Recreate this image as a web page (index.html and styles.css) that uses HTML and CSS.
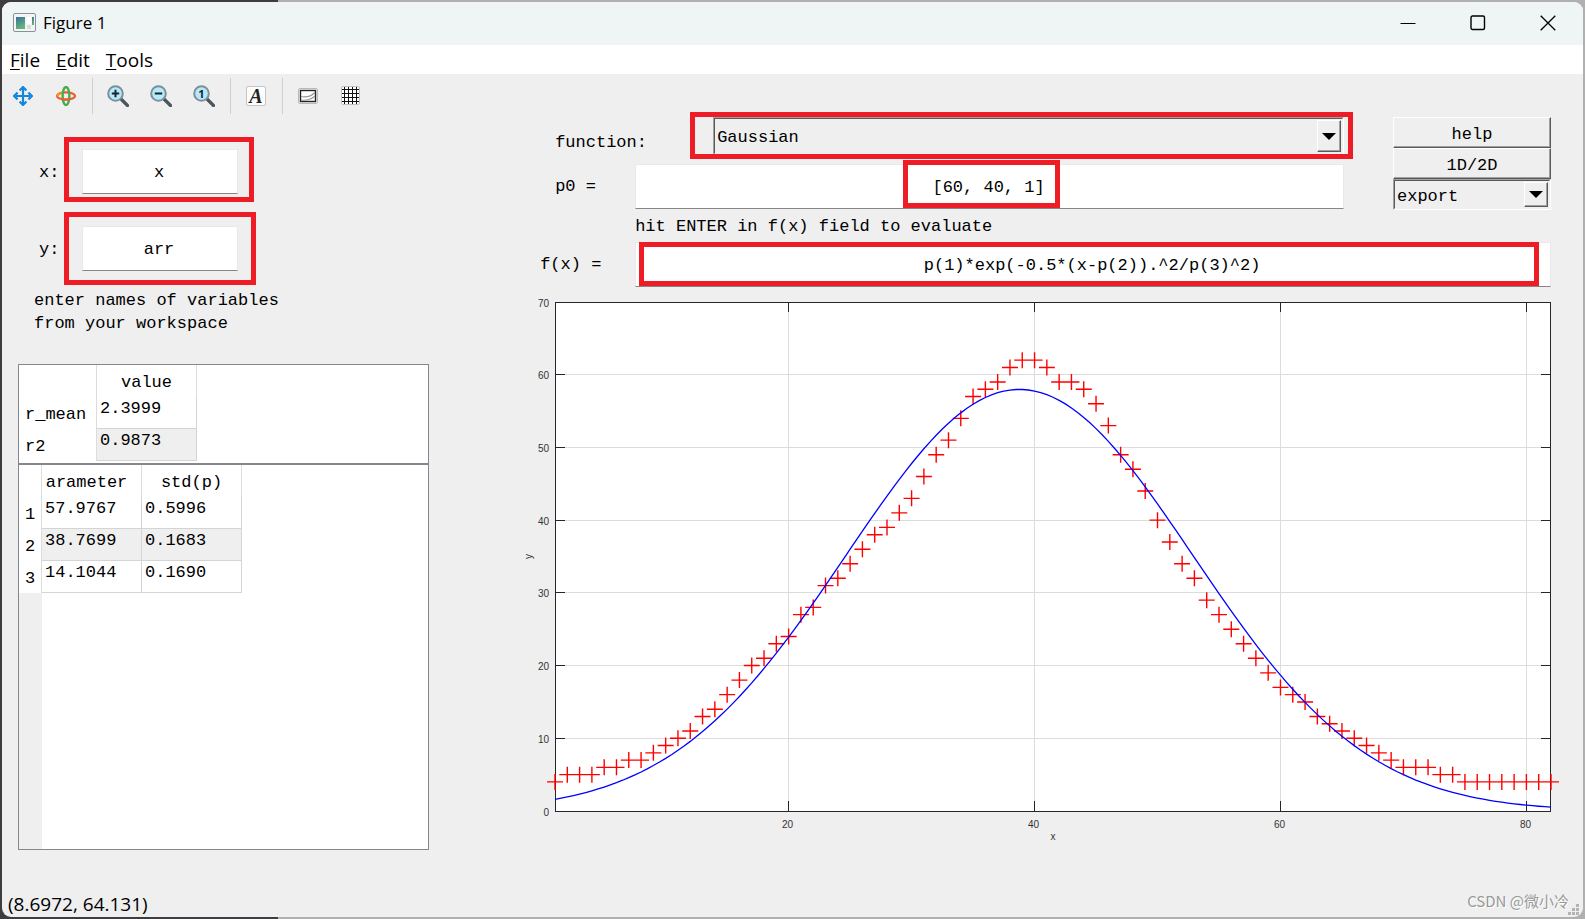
FILE: index.html
```html
<!DOCTYPE html>
<html lang="en">
<head>
<meta charset="utf-8">
<meta name="viewport" content="width=device-width, initial-scale=1">
<title>Figure 1</title>
<link rel="stylesheet" href="styles.css">
</head>
<body>
<div class="window">
  <header class="titlebar">
    <svg class="app-icon" width="24" height="20" viewBox="0 0 24 20" aria-hidden="true">
      <defs><linearGradient id="pic" x1="0" y1="0" x2="0.4" y2="1"><stop offset="0" stop-color="#3b6fa0"/><stop offset="1" stop-color="#5fb878"/></linearGradient></defs>
      <rect x="0.5" y="0.5" width="22" height="18" rx="1.5" fill="#f4f4f4" stroke="#8c9196"/>
      <rect x="3" y="4" width="9" height="12" fill="url(#pic)"/>
      <rect x="14" y="4" width="4" height="7" fill="#fff"/><rect x="14" y="12" width="4" height="4" fill="#ddd"/>
      <rect x="19" y="4" width="2" height="8" fill="url(#pic)"/>
    </svg>
    <h1 class="title">Figure 1</h1>
    <div class="window-buttons">
      <button class="window-button" aria-label="Minimize"><svg width="16" height="16" viewBox="0 0 16 16"><path d="M0.5 8.5h15" stroke="#000" fill="none"/></svg></button>
      <button class="window-button" aria-label="Maximize"><svg width="16" height="16" viewBox="0 0 16 16"><rect x="1" y="1" width="13.5" height="13.5" rx="1.5" stroke="#000" stroke-width="1.4" fill="none"/></svg></button>
      <button class="window-button" aria-label="Close"><svg width="16" height="16" viewBox="0 0 16 16"><path d="M0.7 0.7l14.6 14.6M15.3 0.7L0.7 15.3" stroke="#000" stroke-width="1.3" fill="none"/></svg></button>
    </div>
  </header>

  <nav class="menubar">
    <button class="menu"><u>F</u>ile</button>
    <button class="menu"><u>E</u>dit</button>
    <button class="menu"><u>T</u>ools</button>
  </nav>

  <div class="toolbar">
    <button class="tool" aria-label="Pan">
      <svg width="20" height="20" viewBox="0 0 20 20"><path d="M10 3v14M3 10h14" stroke="#1486dc" stroke-width="2.2"/><path d="M6.6 4.6L10 1l3.4 3.6M6.6 15.4L10 19l3.4-3.6M4.6 6.6L1 10l3.6 3.4M15.4 6.6L19 10l-3.6 3.4" fill="none" stroke="#1486dc" stroke-width="2.2" stroke-linejoin="round"/></svg>
    </button>
    <button class="tool" aria-label="Rotate">
      <svg width="20" height="20" viewBox="0 0 20 20"><ellipse cx="10" cy="10" rx="9" ry="3.6" fill="none" stroke="#f4582e" stroke-width="2.2"/><path d="M1.2 10.5C1.5 7.500 5 6.500 8 6.400" fill="none" stroke="#ff8a1c" stroke-width="2.2"/><ellipse cx="10" cy="10" rx="3.4" ry="9" fill="none" stroke="#45ac4b" stroke-width="2.4"/><path d="M6 13.2q4 0.8 8 0" fill="none" stroke="#f4582e" stroke-width="2"/></svg>
    </button>
    <span class="separator"></span>
    <button class="tool" aria-label="Zoom in">
      <svg width="22" height="22" viewBox="0 0 22 22"><path d="M14 14l6.500 6.500" stroke="#4b555c" stroke-width="3.2" stroke-linecap="round"/><circle cx="8.500" cy="8.500" r="7.300" fill="#b5e9fb" stroke="#7d8f99" stroke-width="2"/><path d="M4.800 8.500h7.400M8.500 4.800v7.400" stroke="#17252e" stroke-width="2"/></svg>
    </button>
    <button class="tool" aria-label="Zoom out">
      <svg width="22" height="22" viewBox="0 0 22 22"><path d="M14 14l6.500 6.500" stroke="#4b555c" stroke-width="3.2" stroke-linecap="round"/><circle cx="8.500" cy="8.500" r="7.300" fill="#b5e9fb" stroke="#7d8f99" stroke-width="2"/><path d="M4.800 8.500h7.400" stroke="#17252e" stroke-width="2"/></svg>
    </button>
    <button class="tool" aria-label="Original size">
      <svg width="22" height="22" viewBox="0 0 22 22"><path d="M14 14l6.500 6.500" stroke="#4b555c" stroke-width="3.2" stroke-linecap="round"/><circle cx="8.500" cy="8.500" r="7.300" fill="#b5e9fb" stroke="#7d8f99" stroke-width="2"/><text class="lens-digit" x="8.500" y="12.500" text-anchor="middle">1</text></svg>
    </button>
    <span class="separator"></span>
    <button class="tool" aria-label="Insert text">
      <svg width="20" height="20" viewBox="0 0 20 20"><rect x="0.500" y="0.500" width="19" height="19" rx="1.500" fill="#fdfdfd" stroke="#c4c4c4"/><text class="text-glyph" x="10" y="17" text-anchor="middle">A</text></svg>
    </button>
    <span class="separator"></span>
    <button class="tool" aria-label="Axes">
      <svg width="20" height="16" viewBox="0 0 20 16"><rect x="0.500" y="0.500" width="19" height="15" rx="1.500" fill="#f4f4f4" stroke="#b9b9b9"/><rect x="2.500" y="2.500" width="15" height="11" fill="#fff" stroke="#222" stroke-width="1.4"/><path d="M3 8.500c5 1 10 0 14-4M3 12c5 1 11-1 14-4" fill="none" stroke="#999" stroke-width="1.2"/></svg>
    </button>
    <button class="tool" aria-label="Grid">
      <svg width="20" height="20" viewBox="0 0 20 20"><rect x="0.500" y="0.500" width="18" height="18" rx="1.500" fill="#fdfdfd" stroke="#c0c0c0"/><path d="M3.500 1v17M7.500 1v17M11.500 1v17M15.500 1v17M1 3.500h17M1 7.500h17M1 11.500h17M1 15.500h17" stroke="#111" fill="none"/></svg>
    </button>
  </div>

  <main class="figure">
    <section class="data-panel">
      <div class="variables">
        <label for="var-x">x:</label>
        <div class="field"><input id="var-x" class="edit" value="x"><span class="mark mark-x"></span></div>
        <label for="var-y">y:</label>
        <div class="field"><input id="var-y" class="edit" value="arr"><span class="mark mark-y"></span></div>
      </div>
      <p class="note">enter names of variables<br>from your workspace</p>
      <div class="sheet">
        <table class="grid">
          <thead><tr><td class="corner-wide"></td><th scope="col">value</th></tr></thead>
          <tbody>
            <tr><th scope="row">r_mean</th><td>2.3999</td></tr>
            <tr><th scope="row">r2</th><td>0.9873</td></tr>
          </tbody>
        </table>
      </div>
      <div class="sheet sheet-fill">
        <table class="grid">
          <thead><tr><td class="corner-narrow"></td><th scope="col" class="clipped">arameter</th><th scope="col">std(p)</th></tr></thead>
          <tbody>
            <tr><th scope="row">1</th><td>57.9767</td><td>0.5996</td></tr>
            <tr><th scope="row">2</th><td>38.7699</td><td>0.1683</td></tr>
            <tr><th scope="row">3</th><td>14.1044</td><td>0.1690</td></tr>
          </tbody>
        </table>
        <div class="gutter"></div>
      </div>
    </section>

    <section class="fit-panel">
      <div class="controls">
        <label class="label label-function" for="function">function:</label>
        <div class="combo combo-function">
          <select id="function" class="select"><option>Gaussian</option></select>
          <span class="arrow"></span>
          <span class="mark mark-function"></span>
        </div>
        <div class="actions">
          <button class="push">help</button>
          <button class="push">1D/2D</button>
          <div class="combo combo-export">
            <select class="select" aria-label="export"><option>export</option></select>
            <span class="arrow"></span>
          </div>
        </div>
        <label class="label" for="p0">p0 =</label>
        <div class="field"><input id="p0" class="edit" value="[60, 40, 1]"><span class="mark mark-p0"></span></div>
        <p class="hint">hit ENTER in f(x) field to evaluate</p>
        <label class="label label-fx" for="fx">f(x) =</label>
        <div class="field field-wide"><input id="fx" class="edit" value="p(1)*exp(-0.5*(x-p(2)).^2/p(3)^2)"><span class="mark mark-fx"></span></div>
      </div>
      <div class="plot"><svg id="plot" class="plot-svg" role="img" aria-label="Data and Gaussian fit"></svg></div>
    </section>
  </main>

  <footer class="statusbar">
    <output class="coords">(8.6972, 64.131)</output>
    <span class="credit">CSDN @微小冷</span>
    <svg class="grip" width="12" height="12" viewBox="0 0 12 12" aria-hidden="true"><path d="M8 0h3v3h-3zM8 4h3v3h-3zM4 4h3v3h-3zM8 8h3v3h-3zM4 8h3v3h-3zM0 8h3v3h-3z" fill="#b4b4b4"/></svg>
  </footer>
</div>
<script src="plot.js"></script>
</body>
</html>
```

FILE: styles.css
```css
* {
  box-sizing: border-box;
}

body {
  margin: 0;
  min-height: 100vh;
  padding: 2px;
  display: flex;
  background: linear-gradient(90deg, #3d3d40 278px, #b0b0b0 278px);
  color: #000;
  font-family: "Liberation Mono", "Noto Sans CJK SC", monospace;
  font-size: 17px;
  line-height: 23px;
}

button,
input,
select {
  font: inherit;
  color: inherit;
  margin: 0;
  border-radius: 0;
}

.window {
  flex: 1;
  min-width: 0;
  display: flex;
  flex-direction: column;
  overflow: hidden;
  border-radius: 9px;
  background: #efefef;
}

/* Title bar, menus and tools */
.titlebar {
  display: flex;
  align-items: center;
  height: 43px;
  padding: 0 0 2px 11px;
  background: #eff4f5;
  font-family: "Open Sans", "Noto Sans", sans-serif;
}

.app-icon {
  margin-right: 6px;
}

.title {
  margin: 0;
  font-size: 17px;
  font-weight: 400;
}

.window-buttons {
  display: flex;
  margin-left: auto;
}

.window-button {
  display: grid;
  place-items: center;
  width: 70px;
  height: 41px;
  padding: 0;
  border: 0;
  background: none;
}

.menubar {
  display: flex;
  height: 29px;
  background: #fff;
}

.menu {
  padding: 2px 8px 0;
  border: 0;
  background: none;
  font-family: "Open Sans", "Noto Sans", sans-serif;
  font-size: 19px;
}

.menu u {
  text-underline-offset: 2px;
}

.toolbar {
  display: flex;
  align-items: center;
  height: 43px;
  margin-left: -1px;
}

.tool {
  display: grid;
  place-items: center;
  width: 43px;
  height: 36px;
  padding: 0;
  border: 0;
  background: none;
}

.separator {
  width: 1px;
  height: 36px;
  margin: 0 3px 0 5px;
  background: #cfcfcf;
}

.lens-digit {
  font: bold 11px "Open Sans", sans-serif;
  fill: #17252e;
}

.text-glyph {
  font: italic bold 20px "Liberation Serif", serif;
  fill: #222;
}

/* Figure body */
.figure {
  flex: 1;
  display: grid;
  grid-template-columns: minmax(0, 2fr) minmax(0, 5fr);
  column-gap: 94px;
  padding: 0 32px 0 16px;
}

.data-panel,
.fit-panel {
  display: flex;
  flex-direction: column;
}

.variables {
  display: grid;
  grid-template-columns: 43px 156px;
  row-gap: 32px;
  padding: 32px 0 0 21px;
  align-items: center;
}

.variables label {
  padding-top: 2px;
}

.field {
  position: relative;
}

.edit {
  display: block;
  width: 100%;
  height: 45px;
  padding: 2px 6px 0 4px;
  border: 1px solid #e9e9e9;
  border-bottom-color: #868686;
  background: #fff;
  text-align: center;
}

.note {
  margin: 18px 0 29px 16px;
}

.sheet {
  padding-bottom: 2px;
  border: 1px solid #828790;
  background: #fff;
}

.sheet-fill {
  flex: 1;
  display: flex;
  flex-direction: column;
  align-items: flex-start;
  padding-bottom: 0;
}

.grid {
  border-spacing: 0;
}

.grid th,
.grid td {
  height: 32px;
  padding: 0;
  font-weight: 400;
}

.grid thead th {
  width: 100px;
  padding-top: 2px;
  border-right: 1px solid #dcdcdc;
}

.grid thead td {
  border-right: 1px solid #dcdcdc;
}

.grid thead .clipped {
  padding-right: 10px;
}

.grid .corner-wide {
  width: 78px;
}

.grid .corner-narrow {
  width: 23px;
}

.grid tbody th {
  padding: 3px 0 0 6px;
  border-right: 1px solid #dcdcdc;
  text-align: left;
}

.grid tbody td {
  padding-left: 3px;
  border-right: 1px solid #d4d4d4;
  border-bottom: 1px solid #d4d4d4;
  vertical-align: top;
}

.grid tbody tr:nth-child(even) td {
  background: #efefef;
}

.gutter {
  flex: 1;
  width: 23px;
  background: #efefef;
}

/* Fit controls */
.controls {
  display: grid;
  grid-template-columns: 112px minmax(0, 1fr) 49px 158px;
  grid-template-rows: 47px 45px 33px 45px;
  align-items: center;
}

.label {
  grid-column: 1;
  padding-left: 32px;
}

.label-function {
  padding-top: 4px;
}

.label-fx {
  padding-left: 17px;
}

.hint {
  grid-column: 2;
  margin: 0;
  padding-top: 2px;
}

.field-wide {
  grid-column: 2 / 5;
}

.combo {
  position: relative;
  border: 1px solid;
  border-color: #a0a0a0 #fff #fff #a0a0a0;
}

.combo-function {
  align-self: start;
  height: 38px;
  margin-left: 78px;
}

.combo-export {
  height: 31px;
}

.select {
  display: block;
  width: 100%;
  height: 100%;
  padding: 3px 26px 0 2px;
  border: 1px solid;
  border-color: #5a5a5a #efefef #efefef #5a5a5a;
  background: #efefef;
  appearance: none;
}

.arrow {
  position: absolute;
  top: 2px;
  right: 2px;
  bottom: 2px;
  width: 24px;
  display: grid;
  place-items: center;
  border: 1px solid;
  border-color: #fff #5a5a5a #5a5a5a #fff;
  box-shadow: inset -1px -1px #a0a0a0;
  pointer-events: none;
}

.arrow::after {
  content: "";
  border: 7px solid transparent;
  border-top-color: #000;
  border-bottom-width: 0;
}

.actions {
  grid-area: 1 / 4 / 3 / 5;
  align-self: start;
  display: flex;
  flex-direction: column;
}

.push {
  height: 31px;
  padding: 3px 0 0;
  border: 1px solid;
  border-color: #fff #5a5a5a #5a5a5a #fff;
  box-shadow: inset -1px -1px #a0a0a0;
  background: #efefef;
}

/* Red highlight frames drawn over the controls */
.mark {
  position: absolute;
  border: 5px solid #ee1c25;
  pointer-events: none;
}

.mark-x {
  inset: -12px -16px -8px -18px;
}

.mark-y {
  inset: -14px -18px -14px -18px;
}

.mark-function {
  inset: -6px -10px -5px -24px;
}

.mark-p0 {
  top: -4px;
  bottom: 1px;
  left: calc(50% - 87px);
  width: 157px;
}

.mark-fx {
  inset: 0 12px 1px 4px;
}

/* Plot */
.plot {
  flex: 1;
  position: relative;
  min-height: 260px;
}

.plot-svg {
  position: absolute;
  inset: 0;
  width: 100%;
  height: 100%;
  overflow: visible;
}

.plot-frame {
  fill: none;
  stroke: #262626;
}

.plot-area {
  fill: #fff;
}

.plot-gridline {
  stroke: #dcdcdc;
}

.plot-tick {
  stroke: #262626;
}

.plot-text {
  font: 10px "Liberation Sans", sans-serif;
  fill: #333;
}

.plot-cross {
  fill: none;
  stroke: #f00;
  stroke-width: 1.4px;
}

.plot-curve {
  fill: none;
  stroke: #00f;
  stroke-width: 1.3px;
}

/* Status bar */
.statusbar {
  position: relative;
  display: flex;
  align-items: flex-end;
  justify-content: space-between;
  height: 67px;
  padding: 0 14px 1px 6px;
  font-family: "Open Sans", "Noto Sans CJK SC", sans-serif;
}

.coords {
  font-size: 19px;
}

.credit {
  padding-bottom: 4px;
  color: #999;
  font-family: "Noto Sans CJK SC", sans-serif;
  font-size: 15px;
  text-shadow: 1px 1px #fff;
}

.grip {
  position: absolute;
  right: 3px;
  bottom: 1px;
}
```

FILE: plot.js
```js
const svg = document.getElementById("plot");

const samples = [
  4, 5, 5, 5, 6, 6, 7, 7, 8, 9, 10, 11, 13, 14, 16, 18, 20, 21, 23, 24,
  27, 28, 31, 32, 34, 36, 38, 39, 41, 43, 46, 49, 51, 54, 57, 58, 59, 61, 62, 62,
  61, 59, 59, 58, 56, 53, 49, 47, 44, 40, 37, 34, 32, 29, 27, 25, 23, 21, 19, 17,
  16, 15, 13, 12, 11, 10, 9, 8, 7, 6, 6, 6, 5, 5, 4, 4, 4, 4, 4, 4, 4, 4
];
const fit = [57.9767, 38.7699, 14.1044];
const margin = { left: 32, right: 0, top: 15, bottom: 39 };

function add(name, attributes, text) {
  const node = document.createElementNS("http://www.w3.org/2000/svg", name);
  for (const key in attributes) node.setAttribute(key, attributes[key]);
  if (text !== undefined) node.textContent = text;
  svg.appendChild(node);
}

function draw() {
  const box = svg.getBoundingClientRect();
  const left = margin.left;
  const right = Math.round(box.width) - margin.right;
  const top = margin.top;
  const bottom = Math.round(box.height) - margin.bottom;
  const px = x => left + (x - 1) / 81 * (right - left);
  const py = y => bottom - y / 70 * (bottom - top);
  const crisp = v => Math.floor(v) + 0.5;

  svg.replaceChildren();
  add("rect", { class: "plot-area", x: left, y: top, width: right - left, height: bottom - top });

  let gridlines = "", ticks = "";
  for (let x = 20; x <= 80; x += 20) {
    const p = crisp(px(x));
    gridlines += `M${p} ${top}V${bottom}`;
    ticks += `M${p} ${top}v10M${p} ${bottom}v-10`;
    add("text", { class: "plot-text", x: p - 1, y: bottom + 17, "text-anchor": "middle" }, x);
  }
  for (let y = 0; y <= 70; y += 10) {
    const p = crisp(py(y));
    if (y > 0 && y < 70) {
      gridlines += `M${left} ${p}H${right}`;
      ticks += `M${left} ${p}h10M${right} ${p}h-10`;
    }
    add("text", { class: "plot-text", x: left - 6, y: p + 4, "text-anchor": "end" }, y);
  }
  add("path", { class: "plot-gridline", d: gridlines });
  add("path", { class: "plot-tick", d: ticks });
  add("rect", { class: "plot-frame", x: left + 0.5, y: top + 0.5, width: right - left - 1, height: bottom - top });

  const middleX = (left + right) / 2, middleY = (top + bottom) / 2;
  add("text", { class: "plot-text", x: middleX, y: bottom + 29, "text-anchor": "middle" }, "x");
  add("text", { class: "plot-text", transform: `translate(9 ${middleY}) rotate(-90)`, "text-anchor": "middle" }, "y");

  const crosses = samples.map((y, i) => `M${px(i + 1) - 8} ${py(y)}h16M${px(i + 1)} ${py(y) - 8}v16`);
  add("path", { class: "plot-cross", d: crosses.join("") });

  const points = [];
  for (let x = 1; x <= 82; x += 0.5) {
    points.push(`${px(x)} ${py(fit[0] * Math.exp(-0.5 * (x - fit[1]) ** 2 / fit[2] ** 2))}`);
  }
  add("path", { class: "plot-curve", d: "M" + points.join("L") });
}

draw();
window.addEventListener("resize", draw);
```
